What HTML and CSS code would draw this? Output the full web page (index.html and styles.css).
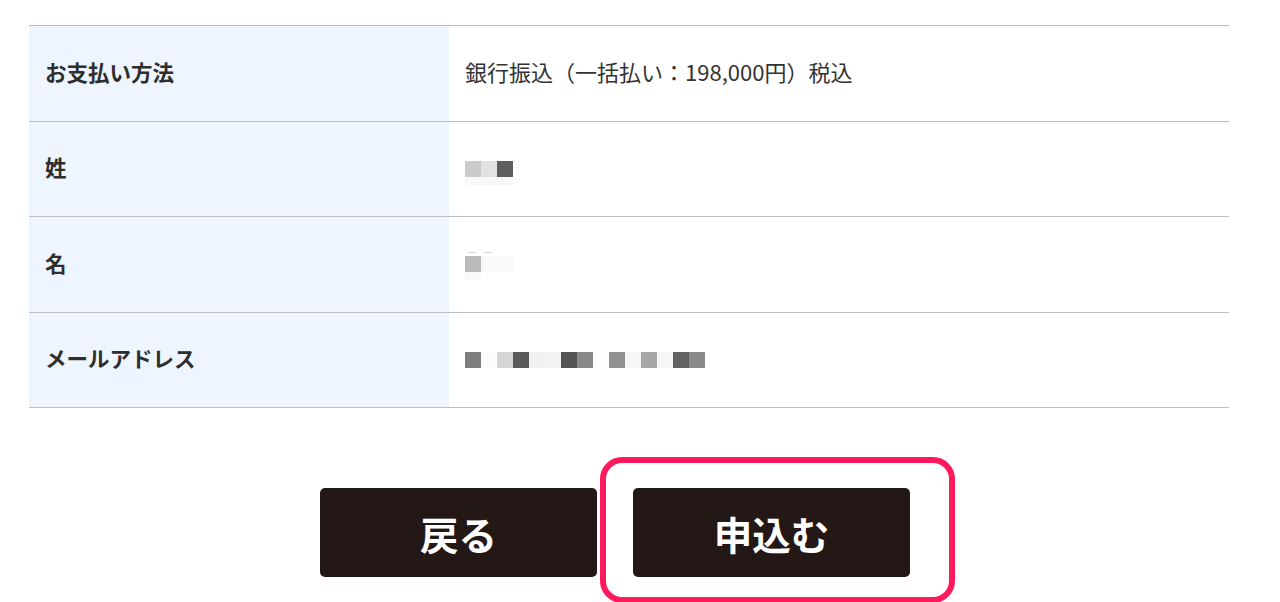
FILE: index.html
```html
<!DOCTYPE html>
<html lang="ja">
<head>
<meta charset="utf-8">
<link rel="stylesheet" href="styles.css">
</head>
<body>
<div class="page">
  <div class="table">
    <div class="row">
      <div class="label">お支払い方法</div>
      <div class="value">銀行振込（一括払い：198,000円）税込</div>
    </div>
    <div class="row">
      <div class="label">姓</div>
      <div class="value">
        <svg class="mosaic" width="64" height="32" viewBox="0 0 64 32">
          <rect x="0" y="8" width="16" height="16" fill="#cbcbcb"/>
          <rect x="16" y="8" width="16" height="16" fill="#e2e2e2"/>
          <rect x="32" y="8" width="16" height="16" fill="#5e5e5e"/>
          <rect x="0" y="24" width="48" height="8" fill="#f8f8f8"/>
        </svg>
      </div>
    </div>
    <div class="row">
      <div class="label">名</div>
      <div class="value">
        <svg class="mosaic" width="64" height="32" viewBox="0 0 64 32">
          <rect x="2" y="4" width="10" height="1" fill="#d8d8d8"/>
          <rect x="18" y="4" width="10" height="1" fill="#d8d8d8"/>
          <rect x="0" y="8" width="16" height="16" fill="#bababa"/>
          <rect x="16" y="8" width="32" height="16" fill="#f9f9f9"/>
          <rect x="0" y="24" width="16" height="8" fill="#fafafa"/>
        </svg>
      </div>
    </div>
    <div class="row">
      <div class="label">メールアドレス</div>
      <div class="value">
        <svg class="mosaic" width="260" height="32" viewBox="0 0 260 32">
          <rect x="0" y="8" width="16" height="16" fill="#7d7d7d"/>
          <rect x="16" y="8" width="16" height="16" fill="#fcfcfc"/>
          <rect x="32" y="8" width="16" height="16" fill="#d5d5d5"/>
          <rect x="48" y="8" width="16" height="16" fill="#5a5a5a"/>
          <rect x="64" y="8" width="16" height="16" fill="#f1f1f1"/>
          <rect x="80" y="8" width="16" height="16" fill="#f2f2f2"/>
          <rect x="96" y="8" width="16" height="16" fill="#545454"/>
          <rect x="112" y="8" width="16" height="16" fill="#888888"/>
          <rect x="144" y="8" width="16" height="16" fill="#919191"/>
          <rect x="160" y="8" width="16" height="16" fill="#f6f6f6"/>
          <rect x="176" y="8" width="16" height="16" fill="#a7a7a7"/>
          <rect x="192" y="8" width="16" height="16" fill="#f6f6f6"/>
          <rect x="208" y="8" width="16" height="16" fill="#636363"/>
          <rect x="224" y="8" width="16" height="16" fill="#8a8a8a"/>
        </svg>
      </div>
    </div>
  </div>

  <div class="actions">
    <button class="btn">戻る</button>
    <div class="btn-wrap">
      <button class="btn">申込む</button>
      <span class="highlight"></span>
    </div>
  </div>
</div>
</body>
</html>
```

FILE: styles.css
```css
* { box-sizing: border-box; }
html, body {
  margin: 0;
  padding: 0;
  background: #ffffff;
  overflow: hidden;
}
body {
  font-family: "Noto Sans CJK JP", "Noto Sans", sans-serif;
  color: #333333;
}
.page {
  width: 1280px;
  height: 602px;
  padding-top: 25px;
}
.table {
  margin-left: 29px;
  width: 1200px;
  border-top: 1px solid #bdbdbd;
}
.row {
  display: flex;
  height: 95.5px;
  border-bottom: 1px solid #bdbdbd;
}
.label {
  width: 420px;
  background: #eef5fe;
  display: flex;
  align-items: center;
  padding-left: 16px;
  padding-bottom: 4px;
  font-size: 21.5px;
  font-weight: 700;
  color: #2e2e2e;
}
.value {
  flex: 1;
  display: flex;
  align-items: center;
  padding-left: 16px;
  font-size: 22px;
  color: #333333;
}
.value:first-child, .row:first-child .value {
  padding-bottom: 4px;
}
.mosaic { display: block; }
.actions {
  display: flex;
  gap: 36px;
  padding-left: 320px;
  margin-top: 80px;
}
.btn {
  width: 277px;
  height: 89px;
  background: #231815;
  color: #ffffff;
  border: none;
  border-radius: 5px;
  font-family: "Noto Sans CJK JP", sans-serif;
  font-size: 38.5px;
  font-weight: 700;
  padding: 0;
  display: flex;
  align-items: center;
  justify-content: center;
}
.btn-wrap {
  position: relative;
}
.highlight {
  position: absolute;
  left: -33px;
  top: -31px;
  width: 355px;
  height: 146px;
  border: 6px solid #ff1a5e;
  border-radius: 22px;
}
```
